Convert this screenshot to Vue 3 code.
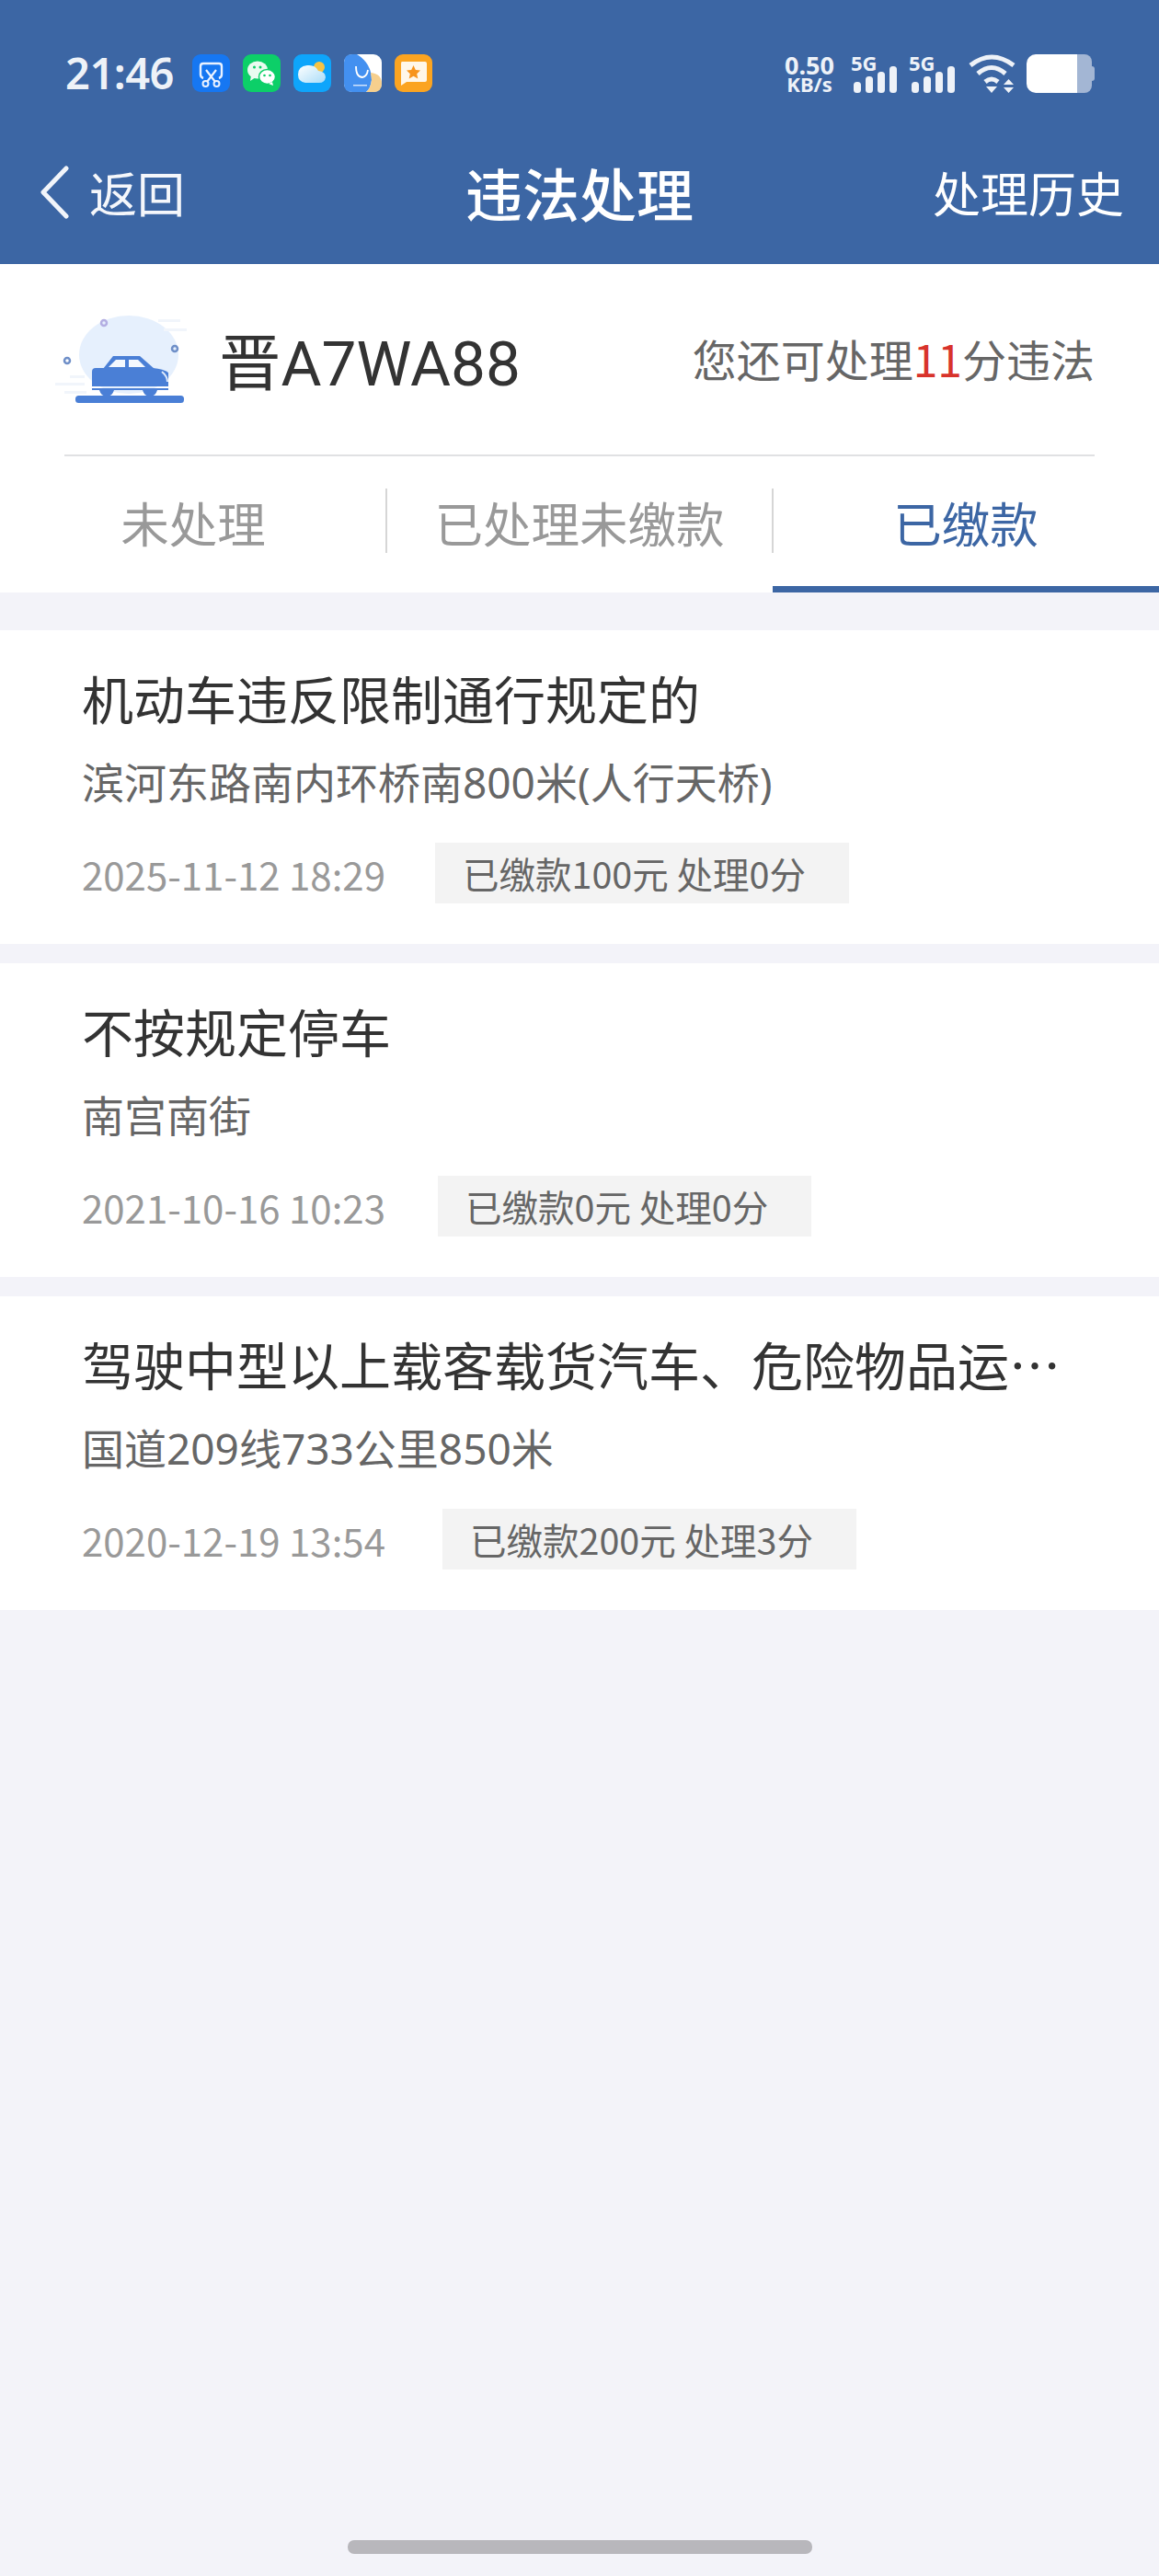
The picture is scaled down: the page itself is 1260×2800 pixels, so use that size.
<template>
  <div class="page">
    <header class="top">
      <div class="status">
        <span class="clock">21:46</span>
        <div class="apps">
          <svg class="app" viewBox="0 0 41 41">
            <rect width="41" height="41" rx="9" fill="#1677f2"/>
            <path d="M12 26 Q9 25 9 22 V13 Q9 10 12 10 H29 Q32 10 32 13 V22 Q32 25 29 26" fill="none" stroke="#eaf2ff" stroke-width="2.4"/>
            <path d="M15 17 L25 30 M26 17 L16 30" stroke="#eaf2ff" stroke-width="2.2"/>
            <circle cx="14.500" cy="32" r="3" fill="none" stroke="#eaf2ff" stroke-width="2"/>
            <circle cx="26.500" cy="32" r="3" fill="none" stroke="#eaf2ff" stroke-width="2"/>
          </svg>
          <svg class="app" viewBox="0 0 41 41">
            <rect width="41" height="41" rx="9" fill="#0ccf68"/>
            <ellipse cx="16" cy="17" rx="11" ry="9.500" fill="#eafbf0"/>
            <path d="M9 23 L8 29 L14 25Z" fill="#eafbf0"/>
            <ellipse cx="26.500" cy="24.500" rx="9" ry="8" fill="#fff" stroke="#0ccf68" stroke-width="1.500"/>
            <path d="M32 30 L33 34 L28 32Z" fill="#fff"/>
            <circle cx="12.500" cy="14" r="1.500" fill="#0ccf68"/>
            <circle cx="19" cy="14" r="1.500" fill="#0ccf68"/>
            <circle cx="23.500" cy="23" r="1.300" fill="#0ccf68"/>
            <circle cx="29.500" cy="23" r="1.300" fill="#0ccf68"/>
          </svg>
          <svg class="app" viewBox="0 0 41 41">
            <defs>
              <linearGradient id="cloud" x1="0" y1="0" x2="1" y2="1">
                <stop offset="0" stop-color="#ffffff"/>
                <stop offset="1" stop-color="#a9dcf8"/>
              </linearGradient>
            </defs>
            <rect width="41" height="41" rx="9" fill="#0ea5fb"/>
            <circle cx="28" cy="14" r="6" fill="#f6c344"/>
            <path d="M13 31 Q5 30 5 22 Q5 13 15 12 Q24 11 27 18 Q35 19 35 25 Q34 31 28 31Z" fill="url(#cloud)"/>
          </svg>
          <svg class="app" viewBox="0 0 41 41">
            <rect width="41" height="41" rx="9" fill="#fff"/>
            <path d="M9 0 H14 Q30 10 30 28 Q29 37 24 41 H9 Q0 41 0 32 V9 Q0 0 9 0Z" fill="#4390f0"/>
            <path d="M29 20 Q41 21 41 32 Q41 41 32 41 H24 Q29 37 30 28Z" fill="#f6cf8d"/>
            <path d="M13 13 Q13 25 20 25 Q25 24 26 17" fill="none" stroke="#fff" stroke-width="1.800"/>
            <rect x="10" y="33" width="15" height="1.500" fill="#cfe2fb"/>
          </svg>
          <svg class="app" viewBox="0 0 41 41">
            <rect width="41" height="41" rx="9" fill="#fba421"/>
            <path d="M8 8 H33 Q35 8 35 10 V28 Q35 30 33 30 H13 L7 34 V10 Q7 8 8 8Z" fill="#fff7ea"/>
            <path d="M20.500 12 L22.800 17 L28 17.600 L24.200 21.200 L25.300 26.500 L20.500 23.800 L15.700 26.500 L16.800 21.200 L13 17.600 L18.200 17Z" fill="#f7941d"/>
          </svg>
        </div>
        <div class="indicators">
          <div class="speed"><b>0.50</b><b class="unit">KB/s</b></div>
          <div v-for="n in 2" :key="n" class="signal">
            <b class="gen">5G</b>
            <svg class="bars" viewBox="0 0 47 29">
              <rect x="0" y="17" width="8" height="12" rx="3.500"/>
              <rect x="13" y="11" width="8" height="18" rx="3.500"/>
              <rect x="26" y="6" width="8" height="23" rx="3.500"/>
              <rect x="39" y="0" width="8" height="29" rx="3.500"/>
            </svg>
          </div>
          <svg class="wifi" viewBox="0 0 52 42">
            <path d="M3 12 Q26 -6 50 12" fill="none" stroke="#eef2f8" stroke-width="5"/>
            <path d="M11 21 Q26 8 41 21" fill="none" stroke="#eef2f8" stroke-width="5"/>
            <path d="M19 30 Q26 24 33 30" fill="none" stroke="#eef2f8" stroke-width="5"/>
            <path d="M20 35 H32 L26 42Z" fill="#eef2f8"/>
            <path d="M39 33 L44.500 27 L50 33Z M39 36 H50 L44.500 42Z" fill="#eef2f8"/>
          </svg>
          <div class="battery"><div class="charge"></div><div class="rest"></div><div class="nub"></div></div>
        </div>
      </div>
      <nav class="nav">
        <div class="back">
          <svg class="chevron" viewBox="0 0 32 58">
            <path d="M29 3 L4 29 L29 55" fill="none" stroke="#f2f5fa" stroke-width="5" stroke-linecap="round" stroke-linejoin="round"/>
          </svg>
          <span>返回</span>
        </div>
        <h1 class="title">违法处理</h1>
        <span class="history">处理历史</span>
      </nav>
    </header>

    <section class="info">
      <div class="vehicle">
        <svg class="car" viewBox="0 0 145 100">
          <ellipse cx="80" cy="46.500" rx="54" ry="42.500" fill="#e6f0fd"/>
          <g fill="#f1f5fb">
            <rect x="112" y="8" width="24" height="3"/>
            <rect x="118" y="18" width="25" height="3"/>
            <rect x="0" y="77" width="32" height="3"/>
            <rect x="16" y="69" width="16" height="3"/>
            <rect x="10" y="86" width="24" height="3"/>
          </g>
          <path d="M52 62 L63 48 H92 L108 62Z" fill="#4a7fd6"/>
          <path d="M58 60 L66 52 H76 V60Z M80 52 H90 L98 60 H80Z" fill="#f4f8fe"/>
          <path d="M44 61 H106 Q118 62 123 66 V81 H40 V65 Q40 61 44 61Z" fill="#4a7fd6"/>
          <path d="M116 65 Q122 70 122 76" fill="none" stroke="#dfeafb" stroke-width="2"/>
          <rect x="40" y="83" width="83" height="2" fill="#4a7fd6"/>
          <path d="M48 85 H64 Q62 92 56 92 Q50 92 48 85Z M95 85 H111 Q109 92 103 92 Q97 92 95 85Z" fill="#4a7fd6"/>
          <rect x="22" y="91" width="118" height="8" rx="3.500" fill="#4a7fd6"/>
          <g fill="none" stroke-width="2.500">
            <circle cx="53" cy="12" r="3" stroke="#b3aee2"/>
            <circle cx="130" cy="40" r="3" stroke="#6f8fc8"/>
            <circle cx="13" cy="53" r="3" stroke="#6f8fc8"/>
          </g>
        </svg>
        <span class="plate">晋A7WA88</span>
      </div>
      <div class="quota">您还可处理<em>11</em>分违法</div>
    </section>

    <div class="tabs">
      <div v-for="(tab, i) in tabs" :key="tab" class="tab" :class="{ active: i === 2 }">
        <span class="tab-label">{{ tab }}</span>
      </div>
    </div>

    <ul class="list">
      <li v-for="item in items" :key="item.date" class="item">
        <div class="item-title">{{ item.title }}</div>
        <div class="item-place">{{ item.place }}</div>
        <div class="item-meta">
          <span class="date" :style="{ width: item.dateWidth + 'px' }">{{ item.date }}</span>
          <span class="tag">{{ item.result }}</span>
        </div>
      </li>
    </ul>

    <div class="home-bar"></div>
  </div>
</template>

<script setup>
const tabs = ['未处理', '已处理未缴款', '已缴款']

const items = [
  {
    title: '机动车违反限制通行规定的',
    place: '滨河东路南内环桥南800米(人行天桥)',
    date: '2025-11-12 18:29',
    dateWidth: 328,
    result: '已缴款100元 处理0分'
  },
  {
    title: '不按规定停车',
    place: '南宫南街',
    date: '2021-10-16 10:23',
    dateWidth: 331,
    result: '已缴款0元 处理0分'
  },
  {
    title: '驾驶中型以上载客载货汽车、危险物品运输车辆以外的机动车超过规定时速',
    place: '国道209线733公里850米',
    date: '2020-12-19 13:54',
    dateWidth: 336,
    result: '已缴款200元 处理3分'
  }
]
</script>

<style scoped>
.page {
  width: 1260px;
  height: 2800px;
  display: flex;
  flex-direction: column;
  background: #f3f3f9;
  font-family: "Noto Sans CJK SC", "Noto Sans", sans-serif;
  overflow: hidden;
}

/* header */
.top {
  height: 287px;
  flex-shrink: 0;
  background: #3c66a4;
  color: #fff;
}

.status {
  display: flex;
  align-items: center;
  height: 41px;
  padding: 59px 70px 0 71px;
}

.clock {
  font-family: "Noto Sans", sans-serif;
  font-size: 47px;
  font-weight: 600;
  line-height: 41px;
  width: 138px;
  color: #eef2f8;
  letter-spacing: -0.5px;
}

.apps {
  display: flex;
  gap: 14px;
}

.app {
  width: 41px;
  height: 41px;
  display: block;
}

.indicators {
  display: flex;
  align-items: flex-start;
  margin-left: auto;
  height: 42px;
  color: #eef2f8;
}

.speed {
  display: flex;
  flex-direction: column;
  align-items: center;
  width: 56px;
  margin-right: 20px;
  font-family: "Noto Sans", sans-serif;
  font-size: 27px;
  line-height: 23px;
}

.speed .unit {
  font-size: 22px;
  line-height: 19px;
}

.signal {
  position: relative;
  width: 47px;
  height: 42px;
  margin-right: 16px;
}

.gen {
  position: absolute;
  left: -3px;
  top: -3px;
  font-family: "Noto Sans", sans-serif;
  font-size: 22px;
  line-height: 24px;
}

.bars {
  position: absolute;
  left: 0;
  bottom: 0;
  width: 47px;
  height: 29px;
  fill: #eef2f8;
}

.wifi {
  width: 52px;
  height: 42px;
  margin: 0 12px 0 -2px;
}

.battery {
  display: flex;
  align-items: center;
  height: 42px;
}

.charge {
  width: 55px;
  height: 42px;
  background: #fff;
  border-radius: 10px 0 0 10px;
}

.rest {
  width: 16px;
  height: 42px;
  background: #a3b6d4;
  border-radius: 0 8px 8px 0;
}

.nub {
  width: 3px;
  height: 16px;
  background: #a3b6d4;
  border-radius: 0 3px 3px 0;
}

.nav {
  display: grid;
  grid-template-columns: 1fr auto 1fr;
  align-items: center;
  box-sizing: border-box;
  height: 187px;
  padding: 30px 38px 0 43px;
}

.back {
  display: flex;
  align-items: center;
  gap: 22px;
  font-size: 52px;
  color: #f5f7fb;
}

.chevron {
  width: 32px;
  height: 58px;
  display: block;
}

.title {
  margin: 0 5px 0 0;
  font-size: 62px;
  font-weight: 500;
  line-height: 1;
}

.history {
  justify-self: end;
  font-size: 52px;
}

/* vehicle row */
.info {
  display: flex;
  align-items: center;
  justify-content: space-between;
  box-sizing: border-box;
  padding: 0 70px 5px 60px;
  height: 209px;
  flex-shrink: 0;
  background: #fff;
  position: relative;
}

.info::after {
  content: "";
  position: absolute;
  left: 70px;
  right: 70px;
  bottom: 0;
  height: 2px;
  background: #e0e1e3;
}

.vehicle {
  display: flex;
  align-items: center;
  gap: 33px;
}

.car {
  width: 145px;
  height: 100px;
  display: block;
}

.plate {
  font-family: Roboto, "Noto Sans CJK SC", sans-serif;
  font-size: 67.5px;
  color: #333;
}

.quota {
  font-size: 48px;
  color: #666;
}

.quota em {
  font-style: normal;
  color: #d8332b;
}

/* tabs */
.tabs {
  display: grid;
  grid-template-columns: 420px 420px 420px;
  height: 148px;
  flex-shrink: 0;
  background: #fff;
}

.tab {
  display: flex;
  align-items: center;
  justify-content: center;
  height: 148px;
  box-sizing: border-box;
  padding-bottom: 7px;
  position: relative;
  font-size: 52.5px;
  color: #999;
}

.tab + .tab::before {
  content: "";
  position: absolute;
  left: -1px;
  top: 35px;
  height: 70px;
  width: 2px;
  background: #d6d6d6;
}

.tab.active {
  color: #3c66a4;
  border-bottom: 7px solid #3c66a4;
  padding-bottom: 0;
}

/* list */
.list {
  list-style: none;
  margin: 41px 0 0;
  padding: 0;
  display: flex;
  flex-direction: column;
  gap: 21px;
}

.item {
  box-sizing: border-box;
  height: 341px;
  padding: 30px 89px 0;
  background: #fff;
}

.item-title {
  width: 1075px;
  font-size: 56px;
  line-height: 86px;
  color: #333;
  white-space: nowrap;
  overflow: hidden;
  text-overflow: ellipsis;
}

.item-place {
  margin-top: 16px;
  font-family: "Noto Sans", "Noto Sans CJK SC", sans-serif;
  font-size: 46px;
  line-height: 66px;
  color: #666;
}

.item-meta {
  display: flex;
  align-items: center;
  gap: 56px;
  margin-top: 33px;
}

.date {
  margin-top: 1px;
  font-size: 42px;
  color: #999;
  white-space: nowrap;
}

.tag {
  box-sizing: border-box;
  height: 66px;
  padding: 0 47px 0 30px;
  background: #f3f3f3;
  font-size: 39.5px;
  line-height: 66px;
  color: #666;
}

.home-bar {
  width: 505px;
  height: 15px;
  margin: auto auto 24px;
  border-radius: 7px;
  background: #b8b7bc;
}
</style>
